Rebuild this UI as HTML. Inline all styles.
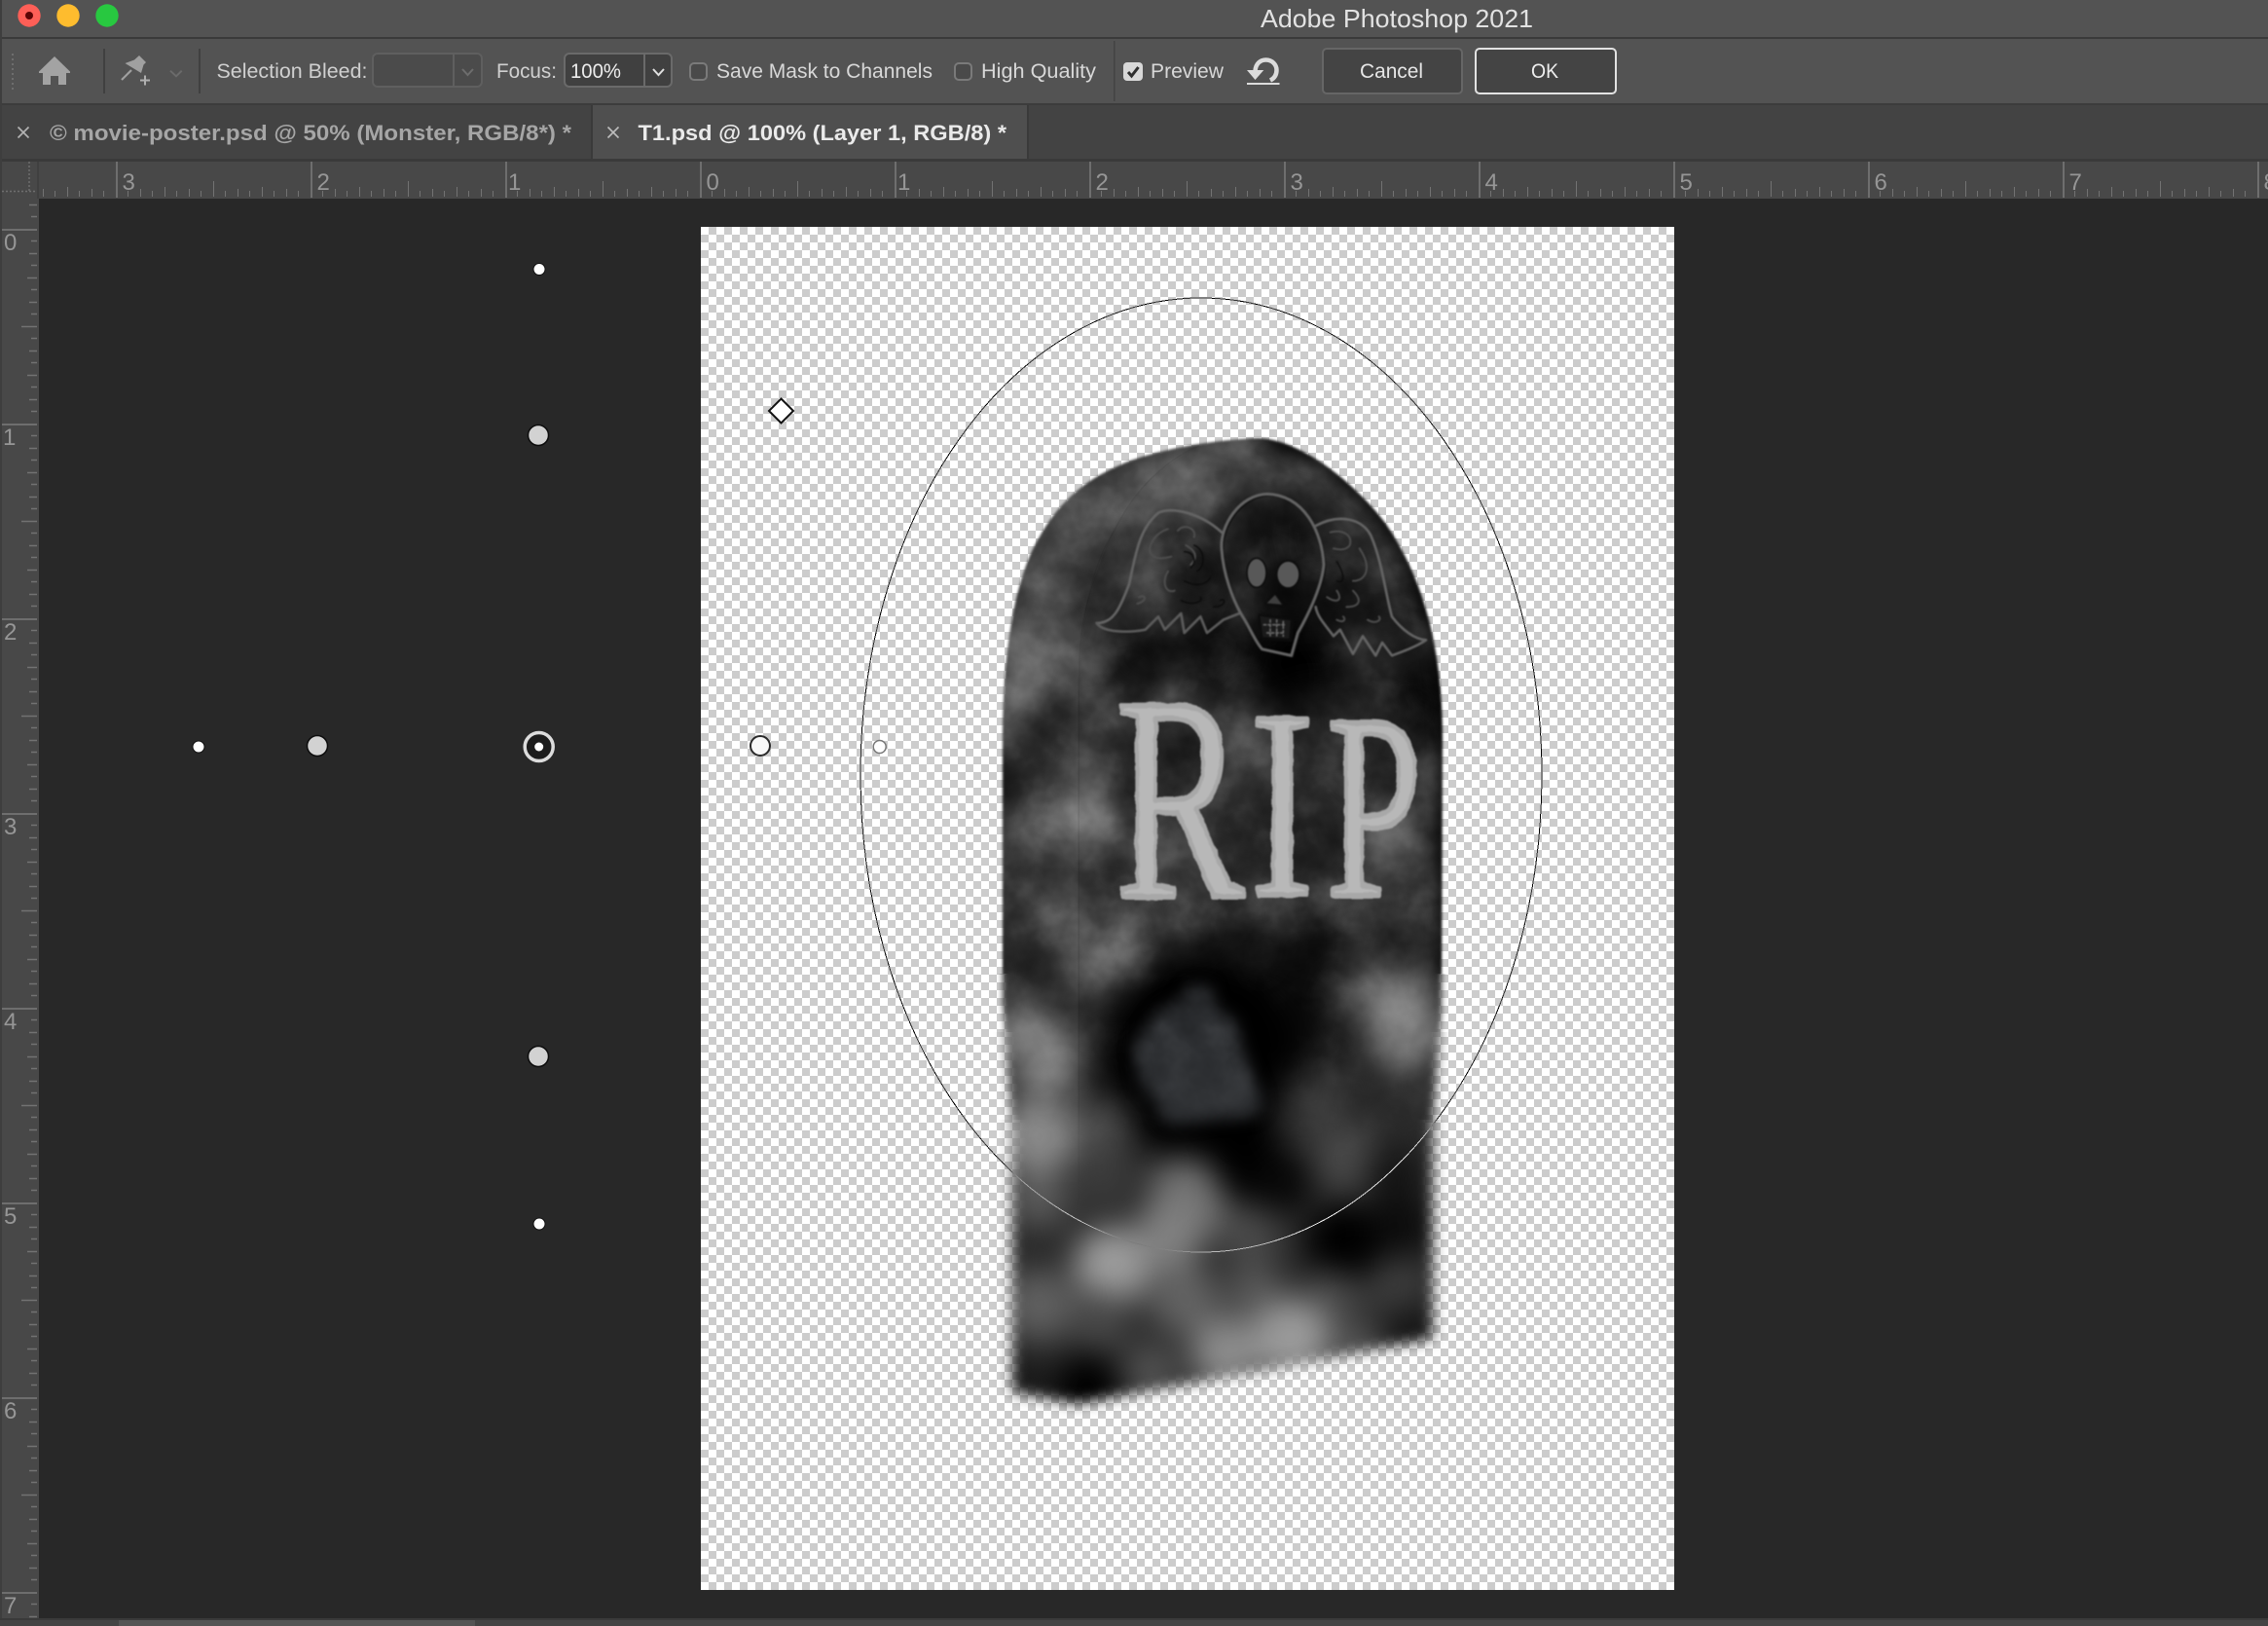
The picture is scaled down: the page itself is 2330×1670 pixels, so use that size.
<!DOCTYPE html>
<html lang="en"><head><meta charset="utf-8"><title>Adobe Photoshop 2021</title>
<style>
html,body{margin:0;padding:0;background:#282828;width:2330px;height:1670px;overflow:hidden}
svg{display:block}
text{font-family:"Liberation Sans",sans-serif}
</style></head><body>
<svg xmlns="http://www.w3.org/2000/svg" width="2330" height="1670" viewBox="0 0 2330 1670">
<defs>
<pattern id="chk" patternUnits="userSpaceOnUse" x="720" y="233" width="16" height="16">
<rect width="16" height="16" fill="#fff"/><rect x="8" width="8" height="8" fill="#ccc"/><rect y="8" width="8" height="8" fill="#ccc"/>
</pattern>
<pattern id="rh" patternUnits="userSpaceOnUse" x="719" y="0" width="200" height="210">
<rect x="0" y="166" width="2" height="37" fill="#6e6e6e"/>
<path stroke="#727272" stroke-width="1" fill="none" d="M12.5 202v-6M25.5 202v-8M37.5 202v-6M50.5 202v-10M62.5 202v-6M75.5 202v-8M87.5 202v-6M100.5 202v-16M112.5 202v-6M125.5 202v-8M137.5 202v-6M150.5 202v-10M162.5 202v-6M175.5 202v-8M187.5 202v-6"/>
</pattern>
<pattern id="rv" patternUnits="userSpaceOnUse" x="0" y="235" width="42" height="200">
<rect x="2" y="0" width="36" height="2" fill="#6e6e6e"/>
<path stroke="#727272" stroke-width="1.4" fill="none" d="M38 12.5h-6M38 25.5h-8M38 37.5h-6M38 50.5h-10M38 62.5h-6M38 75.5h-8M38 87.5h-6M38 100.5h-16M38 112.5h-6M38 125.5h-8M38 137.5h-6M38 150.5h-10M38 162.5h-6M38 175.5h-8M38 187.5h-6"/>
</pattern>
<path id="tp" d="M1030 1030 L1030 760 C1030 660 1045 590 1067 553 C1085 520 1110 495 1150 478 C1180 464 1240 452 1293 450 C1340 452 1395 500 1423 537 C1460 590 1482 660 1482 760 L1481 1040 L1472 1150 L1472 1375 L1107 1442 L1040 1430 L1040 1160 Z"/>
<filter id="f1" filterUnits="userSpaceOnUse" x="960" y="380" width="600" height="1140"><feGaussianBlur stdDeviation="1.4"/></filter>
<filter id="f2" filterUnits="userSpaceOnUse" x="960" y="380" width="600" height="1140"><feGaussianBlur stdDeviation="3"/></filter>
<filter id="f3" filterUnits="userSpaceOnUse" x="960" y="380" width="600" height="1140"><feGaussianBlur stdDeviation="5"/></filter>
<filter id="f4" filterUnits="userSpaceOnUse" x="960" y="380" width="600" height="1140"><feGaussianBlur stdDeviation="7"/></filter>
<filter id="blob" filterUnits="userSpaceOnUse" x="960" y="380" width="600" height="1140" color-interpolation-filters="sRGB"><feGaussianBlur stdDeviation="16"/></filter>
<filter id="b5" filterUnits="userSpaceOnUse" x="960" y="380" width="600" height="1140" color-interpolation-filters="sRGB"><feGaussianBlur stdDeviation="5"/></filter>
<filter id="b8" filterUnits="userSpaceOnUse" x="960" y="380" width="600" height="1140" color-interpolation-filters="sRGB"><feGaussianBlur stdDeviation="8"/></filter>
<filter id="b07" filterUnits="userSpaceOnUse" x="960" y="380" width="600" height="1140" color-interpolation-filters="sRGB"><feGaussianBlur stdDeviation="0.7"/></filter>
<filter id="rough" filterUnits="userSpaceOnUse" x="1100" y="690" width="400" height="270" color-interpolation-filters="sRGB">
<feTurbulence type="fractalNoise" baseFrequency="0.07" numOctaves="2" seed="3" result="t"/>
<feDisplacementMap in="SourceGraphic" in2="t" scale="4" xChannelSelector="R" yChannelSelector="G"/>
<feGaussianBlur stdDeviation="0.9"/>
</filter>
<filter id="noise" filterUnits="userSpaceOnUse" x="1000" y="430" width="520" height="1030" color-interpolation-filters="sRGB">
<feTurbulence type="fractalNoise" baseFrequency="0.02" numOctaves="4" seed="7"/>
<feColorMatrix type="matrix" values="1.4 0 0 0 -0.2  1.4 0 0 0 -0.2  1.4 0 0 0 -0.2  0 0 0 0 1"/>
</filter>
<linearGradient id="nf" gradientUnits="userSpaceOnUse" x1="0" y1="950" x2="0" y2="1200"><stop offset="0" stop-color="#fff"/><stop offset="1" stop-color="#000"/></linearGradient>
<mask id="nm" maskUnits="userSpaceOnUse" x="1000" y="430" width="520" height="1030"><rect x="1000" y="430" width="520" height="1030" fill="url(#nf)"/></mask>
<linearGradient id="sf" gradientUnits="userSpaceOnUse" x1="0" y1="1100" x2="0" y2="1240"><stop offset="0" stop-color="#fff"/><stop offset="1" stop-color="#000"/></linearGradient>
<mask id="sm" maskUnits="userSpaceOnUse" x="1000" y="430" width="520" height="1030"><rect x="1000" y="430" width="520" height="1030" fill="url(#sf)"/></mask>
<clipPath id="c1"><rect x="960" y="380" width="600" height="620"/></clipPath>
<clipPath id="c2"><rect x="960" y="1000" width="600" height="60"/></clipPath>
<clipPath id="c3"><rect x="960" y="1060" width="600" height="90"/></clipPath>
<clipPath id="c4"><rect x="960" y="1150" width="600" height="370"/></clipPath>
<mask id="tm" maskUnits="userSpaceOnUse" x="960" y="380" width="600" height="1140">
<g fill="#fff">
<g clip-path="url(#c1)"><use href="#tp" filter="url(#f1)"/></g>
<g clip-path="url(#c2)"><use href="#tp" filter="url(#f2)"/></g>
<g clip-path="url(#c3)"><use href="#tp" filter="url(#f3)"/></g>
<g clip-path="url(#c4)"><use href="#tp" filter="url(#f4)"/></g>
</g>
</mask>
</defs>

<!-- window chrome -->
<rect width="2330" height="1670" fill="#282828"/>
<rect width="2330" height="38" fill="#535353"/>
<rect y="38" width="2330" height="2" fill="#3a3a3a"/>
<rect y="40" width="2330" height="66" fill="#535353"/>
<rect y="106" width="2330" height="2" fill="#3c3c3c"/>
<rect y="108" width="2330" height="55" fill="#434343"/>
<rect x="609" y="108" width="446" height="55" fill="#4f4f4f"/>
<rect x="607" y="108" width="2" height="55" fill="#3a3a3a"/>
<rect x="1055" y="108" width="2" height="55" fill="#3a3a3a"/>
<rect y="163" width="2330" height="3" fill="#3a3a3a"/>
<rect y="166" width="2330" height="38" fill="#484848"/>
<rect x="0" y="204" width="40" height="1458" fill="#484848"/>
<rect y="0" width="2" height="1670" fill="#3e3e3e"/>

<circle cx="30" cy="16" r="11.7" fill="#fe5f57"/><circle cx="30" cy="16" r="4" fill="#5c0505"/>
<circle cx="70" cy="16" r="11.7" fill="#febc2e"/>
<circle cx="110" cy="16" r="11.7" fill="#28c840"/>
<text x="1295" y="28" font-size="26" fill="#e2e2e2" textLength="280" lengthAdjust="spacingAndGlyphs">Adobe Photoshop 2021</text>

<!-- toolbar -->
<line x1="13" y1="55" x2="13" y2="92" stroke="#6e6e6e" stroke-width="2" stroke-dasharray="2 3"/>
<path fill="#a3a3a3" d="M56 58 L72 73.5 V75 H68 V87 H60 V78 H52 V87 H44 V75 H40 V73.5 Z"/>
<rect x="106" y="50" width="2" height="46" fill="#404040"/>
<path fill="#a0a0a0" d="M143 57 L150 64 L147.5 66.5 L145 75 L128.5 65 L138 61.5 Z"/>
<path stroke="#a0a0a0" stroke-width="2.2" fill="none" d="M125 82 L135 72"/>
<path stroke="#b0b0b0" stroke-width="2" fill="none" d="M144 82.5h10M149 77.5v10"/>
<path stroke="#6b6b6b" stroke-width="2" fill="none" d="M175 72.7 L181 78.3 L186.7 72.7"/>
<rect x="204" y="50" width="2" height="46" fill="#404040"/>

<text x="222.5" y="80" font-size="21" fill="#d0d0d0" textLength="155" lengthAdjust="spacingAndGlyphs">Selection Bleed:</text>
<rect x="383" y="55" width="112" height="34" rx="5" fill="#4b4b4b" stroke="#5f5f5f" stroke-width="2"/>
<rect x="465" y="55" width="2" height="34" fill="#5f5f5f"/>
<path stroke="#6d6d6d" stroke-width="2" fill="none" d="M475 71 L480.5 77 L486 71"/>
<text x="510" y="80" font-size="21" fill="#d0d0d0" textLength="62" lengthAdjust="spacingAndGlyphs">Focus:</text>
<rect x="580" y="55" width="110" height="34" rx="5" fill="#404040" stroke="#6a6a6a" stroke-width="2"/>
<rect x="661" y="55" width="2" height="34" fill="#6a6a6a"/>
<path stroke="#e0e0e0" stroke-width="2" fill="none" d="M671 71 L676.5 77 L682 71"/>
<text x="586" y="80" font-size="21" fill="#ededed" textLength="52" lengthAdjust="spacingAndGlyphs">100%</text>
<rect x="709" y="65" width="17" height="17" rx="4" fill="#4a4a4a" stroke="#7a7a7a" stroke-width="2"/>
<text x="736" y="80" font-size="21" fill="#d8d8d8" textLength="222" lengthAdjust="spacingAndGlyphs">Save Mask to Channels</text>
<rect x="981" y="65" width="17" height="17" rx="4" fill="#4a4a4a" stroke="#7a7a7a" stroke-width="2"/>
<text x="1008" y="80" font-size="21" fill="#d8d8d8" textLength="118" lengthAdjust="spacingAndGlyphs">High Quality</text>
<rect x="1144" y="42" width="1.5" height="62" fill="#434343"/>
<rect x="1154" y="64" width="20" height="19" rx="4" fill="#d8d8d8"/>
<path stroke="#2e2e2e" stroke-width="3" fill="none" d="M1159 74 l3.5 4 l7 -9"/>
<text x="1182" y="80" font-size="21" fill="#d8d8d8" textLength="75" lengthAdjust="spacingAndGlyphs">Preview</text>
<path fill="#dcdcdc" d="M1281 72 L1298.3 72 L1289.5 82 Z"/>
<path stroke="#dcdcdc" stroke-width="4.5" fill="none" d="M1289.5 73 C1290 65 1295 61.5 1300.5 61.5 C1307 61.5 1311.5 66.5 1311.5 72 C1311.5 77 1309 80.5 1305 82.5"/>
<rect x="1281" y="85" width="33.5" height="2" fill="#dcdcdc"/>
<rect x="1359" y="50" width="143" height="46" rx="4" fill="#444" stroke="#666" stroke-width="2"/>
<text x="1397" y="80" font-size="21" fill="#e6e6e6" textLength="65" lengthAdjust="spacingAndGlyphs">Cancel</text>
<rect x="1516" y="50" width="144" height="46" rx="4" fill="#444" stroke="#e2e2e2" stroke-width="2"/>
<text x="1573" y="80" font-size="21" fill="#eee" textLength="28" lengthAdjust="spacingAndGlyphs">OK</text>

<!-- tabs -->
<path stroke="#b4b4b4" stroke-width="1.6" fill="none" d="M18.5 130.5 L29.5 141.5M29.5 130.5 L18.5 141.5"/>
<text x="51" y="144" font-size="22" font-weight="700" fill="#a6a6a6" textLength="536" lengthAdjust="spacingAndGlyphs">© movie-poster.psd @ 50% (Monster, RGB/8*) *</text>
<path stroke="#bdbdbd" stroke-width="1.6" fill="none" d="M624.5 130.5 L635.5 141.5M635.5 130.5 L624.5 141.5"/>
<text x="655.5" y="144" font-size="22" font-weight="700" fill="#eaeaea" textLength="378.5" lengthAdjust="spacingAndGlyphs">T1.psd @ 100% (Layer 1, RGB/8) *</text>

<!-- rulers -->
<rect x="40" y="166" width="2290" height="38" fill="url(#rh)"/>
<rect x="0" y="204" width="42" height="1458" fill="url(#rv)"/>
<path stroke="#6e6e6e" stroke-width="1.5" stroke-dasharray="2 2" fill="none" d="M30 166v31M2 196.5h36"/>
<rect x="38" y="166" width="2" height="38" fill="#404040"/>
<g font-size="24" fill="#969696">
<text x="125.5" y="195">3</text><text x="325.5" y="195">2</text><text x="522" y="195">1</text><text x="725.5" y="195">0</text>
<text x="922" y="195">1</text><text x="1125.5" y="195">2</text><text x="1325.5" y="195">3</text><text x="1525.5" y="195">4</text>
<text x="1725.5" y="195">5</text><text x="1925.5" y="195">6</text><text x="2125.5" y="195">7</text><text x="2325.5" y="195">8</text>
<text x="4" y="257">0</text><text x="3" y="457">1</text><text x="4" y="657">2</text><text x="4" y="857">3</text>
<text x="4" y="1057">4</text><text x="4" y="1257">5</text><text x="4" y="1457">6</text><text x="4" y="1657">7</text>
</g>

<!-- bottom bar -->
<rect y="1662" width="2330" height="8" fill="#444"/>
<rect y="1662" width="2330" height="2" fill="#3a3a3a"/>
<rect x="122" y="1664" width="366" height="6" fill="#545454"/>

<!-- document -->
<rect x="720" y="233" width="1000" height="1400" fill="url(#chk)"/>

<!-- tombstone -->
<g mask="url(#tm)">
<rect x="990" y="420" width="520" height="1040" fill="#2c2c2c"/>
<g filter="url(#blob)">
<circle cx="1293" cy="480" r="40" fill="#383838"/><circle cx="1250" cy="470" r="34" fill="#444"/><circle cx="1217" cy="492" r="32" fill="#6c6c6c"/><circle cx="1160" cy="520" r="36" fill="#454545"/><circle cx="1093" cy="533" r="34" fill="#505050"/><circle cx="1060" cy="565" r="34" fill="#424242"/><circle cx="1350" cy="500" r="36" fill="#363636"/><circle cx="1410" cy="527" r="34" fill="#2e2e2e"/><circle cx="1317" cy="553" r="38" fill="#0e0e0e"/><circle cx="1233" cy="587" r="40" fill="#181818"/><circle cx="1170" cy="600" r="34" fill="#383838"/><circle cx="1120" cy="620" r="34" fill="#363636"/><circle cx="1060" cy="620" r="34" fill="#4a4a4a"/><circle cx="1317" cy="620" r="38" fill="#0e0e0e"/><circle cx="1367" cy="603" r="36" fill="#161616"/><circle cx="1425" cy="620" r="34" fill="#1c1c1c"/><circle cx="1470" cy="620" r="26" fill="#222"/>
<circle cx="1050" cy="670" r="32" fill="#6a6a6a"/><circle cx="1100" cy="660" r="34" fill="#404040"/><circle cx="1167" cy="677" r="36" fill="#0e0e0e"/><circle cx="1250" cy="670" r="42" fill="#0e0e0e"/><circle cx="1333" cy="687" r="46" fill="#000"/><circle cx="1417" cy="697" r="30" fill="#222"/><circle cx="1465" cy="710" r="30" fill="#000"/><circle cx="1067" cy="707" r="32" fill="#666"/><circle cx="1200" cy="713" r="28" fill="#383838"/>
<circle cx="1033" cy="723" r="26" fill="#6a6a6a"/><circle cx="1077" cy="745" r="28" fill="#1c1c1c"/><circle cx="1125" cy="735" r="30" fill="#3c3c3c"/><circle cx="1203" cy="780" r="34" fill="#262626"/><circle cx="1277" cy="770" r="36" fill="#4a4a4a"/><circle cx="1350" cy="747" r="36" fill="#262626"/><circle cx="1427" cy="770" r="36" fill="#282828"/><circle cx="1470" cy="740" r="28" fill="#0a0a0a"/><circle cx="1040" cy="810" r="32" fill="#181818"/><circle cx="1100" cy="800" r="28" fill="#3c3c3c"/><circle cx="1117" cy="840" r="34" fill="#727272"/><circle cx="1060" cy="865" r="32" fill="#646464"/><circle cx="1200" cy="860" r="36" fill="#3e3e3e"/><circle cx="1273" cy="847" r="34" fill="#2a2a2a"/><circle cx="1333" cy="860" r="38" fill="#202020"/><circle cx="1433" cy="860" r="32" fill="#646464"/><circle cx="1470" cy="880" r="24" fill="#3a3a3a"/>
<circle cx="1050" cy="905" r="30" fill="#242424"/><circle cx="1083" cy="937" r="30" fill="#505050"/><circle cx="1067" cy="967" r="30" fill="#2e2e2e"/><circle cx="1133" cy="975" r="38" fill="#6e6e6e"/><circle cx="1123" cy="995" r="26" fill="#626262"/><circle cx="1050" cy="1000" r="32" fill="#1a1a1a"/><circle cx="1205" cy="935" r="36" fill="#3c3c3c"/><circle cx="1280" cy="930" r="36" fill="#2e2e2e"/><circle cx="1267" cy="973" r="30" fill="#1e1e1e"/><circle cx="1333" cy="967" r="30" fill="#2e2e2e"/><circle cx="1367" cy="967" r="30" fill="#0c0c0c"/><circle cx="1410" cy="930" r="36" fill="#3c3c3c"/><circle cx="1400" cy="985" r="28" fill="#2e2e2e"/><circle cx="1333" cy="1007" r="40" fill="#0c0c0c"/><circle cx="1423" cy="1020" r="30" fill="#6a6a6a"/><circle cx="1460" cy="1000" r="20" fill="#4c4c4c"/>
<circle cx="1443" cy="1060" r="38" fill="#8a8a8a"/><circle cx="1333" cy="1063" r="40" fill="#080808"/><circle cx="1380" cy="1075" r="28" fill="#1c1c1c"/><circle cx="1050" cy="1057" r="32" fill="#777"/><circle cx="1077" cy="1092" r="34" fill="#787878"/><circle cx="1133" cy="1073" r="30" fill="#2e2e2e"/>
<ellipse cx="1230" cy="1085" rx="100" ry="108" fill="#000"/>
<circle cx="1350" cy="1130" r="32" fill="#3c3c3c"/><circle cx="1433" cy="1123" r="30" fill="#2a2a2a"/><circle cx="1383" cy="1190" r="34" fill="#484848"/><circle cx="1433" cy="1207" r="30" fill="#141414"/>
<circle cx="1067" cy="1167" r="40" fill="#888"/><circle cx="1133" cy="1157" r="30" fill="#4a4a4a"/><circle cx="1133" cy="1210" r="28" fill="#3c3c3c"/><circle cx="1283" cy="1193" r="40" fill="#000"/><circle cx="1217" cy="1225" r="36" fill="#707070"/><circle cx="1317" cy="1215" r="32" fill="#080808"/><circle cx="1067" cy="1232" r="30" fill="#5c5c5c"/><circle cx="1067" cy="1285" r="28" fill="#2a2a2a"/><circle cx="1143" cy="1300" r="40" fill="#9c9c9c"/><circle cx="1227" cy="1240" r="32" fill="#747474"/><circle cx="1200" cy="1270" r="36" fill="#808080"/><circle cx="1283" cy="1270" r="30" fill="#4a4a4a"/><circle cx="1383" cy="1277" r="42" fill="#000"/><circle cx="1440" cy="1260" r="32" fill="#0c0c0c"/>
<circle cx="1433" cy="1320" r="30" fill="#3c3c3c"/><circle cx="1367" cy="1335" r="30" fill="#4c4c4c"/><circle cx="1217" cy="1335" r="36" fill="#626262"/><circle cx="1290" cy="1330" r="30" fill="#585858"/><circle cx="1067" cy="1340" r="36" fill="#606060"/><circle cx="1130" cy="1355" r="30" fill="#484848"/><circle cx="1327" cy="1375" r="40" fill="#9a9a9a"/><circle cx="1260" cy="1390" r="36" fill="#8c8c8c"/><circle cx="1450" cy="1367" r="26" fill="#141414"/><circle cx="1395" cy="1385" r="22" fill="#5c5c5c"/><circle cx="1183" cy="1410" r="28" fill="#525252"/><circle cx="1117" cy="1425" r="34" fill="#000"/><circle cx="1050" cy="1420" r="28" fill="#181818"/>
</g>
<path fill="#2e3033" filter="url(#b8)" d="M1222 1012 L1243 1012 L1249 1035 L1268 1047 L1278 1082 L1294 1120 L1297 1138 L1286 1147 L1250 1150 L1208 1156 L1193 1150 L1189 1132 L1170 1112 L1165 1075 L1186 1042 L1218 1024 Z"/>
<rect x="1000" y="430" width="520" height="1030" filter="url(#noise)" mask="url(#nm)" style="mix-blend-mode:soft-light" opacity=".5"/>
<!-- side panel & seam -->
<g mask="url(#sm)">
<path fill="#fff" opacity=".03" d="M1108 1442 L1108 730 C1108 680 1115 627 1115 627 C1122 595 1140 553 1140 553 C1155 525 1177 497 1177 497 C1195 478 1233 457 1233 457 L1150 470 L1020 560 L1020 1440 Z"/>
<path fill="none" stroke="#000" stroke-opacity=".08" stroke-width="1.5" d="M1108 1442 L1108 730 C1108 680 1110 650 1115 627 C1122 595 1130 570 1140 553 C1152 530 1165 510 1177 497 C1195 478 1215 465 1233 457"/>
</g>
<!-- right edge vignette -->
<path fill="none" stroke="#000" stroke-opacity=".55" stroke-width="14" filter="url(#b5)" d="M1300 452 C1345 458 1395 500 1423 537 C1460 590 1482 660 1482 760 L1481 1000"/>

<!-- skull with wings -->
<g filter="url(#b07)">
<g transform="translate(1000 420) scale(.33333)" fill="none" stroke-linejoin="round" stroke-linecap="round">
<g stroke="#0c0c0c" stroke-width="4" transform="translate(5 5)">
<path d="M905 262 C820 265 760 360 765 430 C770 510 800 590 830 640 C850 670 870 720 890 740 L980 760 L1000 690 C1040 620 1075 540 1080 480 C1075 380 1020 265 905 262 Z"/>
<path d="M880 635 L980 650 L975 710 L890 705 Z"/>
</g>
<g stroke="#646464" stroke-width="8">
<path d="M380 660 C430 660 450 620 480 540 C500 450 510 370 570 320 C610 300 700 320 765 380"/>
<path d="M380 660 C400 690 480 690 530 680 L570 640 L590 680 L640 630 L650 690 L700 640 L720 690 L770 650 L820 630" stroke="#5c5c5c"/>
<path d="M1055 360 C1130 320 1200 340 1225 390 C1260 470 1270 570 1290 640 C1320 680 1360 710 1395 712 C1370 730 1330 745 1290 760 L1260 720 L1240 760 L1200 700 L1170 755 L1130 680 L1110 700 C1080 660 1060 640 1055 610"/>
<path d="M905 262 C820 265 760 360 765 430 C770 510 800 590 830 640 C850 670 870 720 890 740 L980 760 L1000 690 C1040 620 1075 540 1080 480 C1075 380 1020 265 905 262 Z" stroke-width="9"/>
</g>
<g stroke="#4e4e4e" stroke-width="6">
<path d="M600 370 C560 380 530 430 550 450 C565 465 590 460 610 455"/>
<path d="M630 375 C650 350 690 370 680 395 M655 420 C690 440 690 460 670 480 M600 500 C580 530 590 570 620 560 M510 580 C530 570 540 590 505 600"/>
<path d="M1100 380 C1140 370 1170 390 1160 420 C1150 435 1130 435 1110 430 M1190 430 C1230 490 1210 530 1170 530 M1090 580 C1120 600 1140 590 1120 560 M1150 610 C1190 610 1200 590 1170 560 M1215 650 C1240 665 1260 650 1250 640 M1120 650 C1140 660 1150 650 1140 640"/>
</g>
<g stroke="#0a0a0a" stroke-width="4">
<path d="M650 440 C680 440 690 470 670 490 M680 420 C710 430 720 480 690 500 M640 590 C680 610 710 590 700 580 M650 530 C690 550 720 540 730 520 M1120 470 C1150 520 1140 540 1120 530 M740 610 C780 610 780 580 760 590"/>
</g>
<ellipse cx="873" cy="505" rx="30" ry="45" fill="#585858" stroke="#0c0c0c" stroke-width="5"/>
<ellipse cx="970" cy="510" rx="35" ry="42" fill="#585858" stroke="#0c0c0c" stroke-width="5"/>
<path d="M930 570 L955 605 L900 600 Z" fill="#3e3e3e" stroke="#0c0c0c" stroke-width="4"/>
<path d="M880 635 L980 650 L975 710 L890 705 Z" fill="#1a1a1a" stroke="#0c0c0c" stroke-width="5"/>
<path d="M895 665 h70 M905 690 h55 M915 650 v50 M935 650 v50 M955 655 v45" stroke="#6a6a6a" stroke-width="5" stroke-dasharray="7 7"/>
</g>
</g>

<!-- RIP -->
<g filter="url(#rough)" fill="#b8b8b8" stroke="#a8a8a8" stroke-width="6" stroke-linejoin="round">
<text style="font-family:'Liberation Serif',serif" transform="translate(1146 921) scale(.66 1)" font-size="300">R</text>
<text style="font-family:'Liberation Serif',serif" transform="translate(1285 919) scale(.7 1)" font-size="277">I</text>
<text style="font-family:'Liberation Serif',serif" transform="translate(1363 920) scale(.645 1)" font-size="272">P</text>
</g>
</g>

<!-- warp ellipse -->
<ellipse cx="1234" cy="796" rx="350" ry="490" fill="none" stroke="#fff" stroke-width="1" shape-rendering="crispEdges" style="mix-blend-mode:difference"/>

<!-- handles -->
<circle cx="554" cy="276.5" r="6" fill="#fff" stroke="#111" stroke-width="1"/>
<circle cx="553" cy="447" r="10.5" fill="#d2d2d2" stroke="#0c0c0c" stroke-width="1.5"/>
<circle cx="553" cy="1085" r="10.5" fill="#d2d2d2" stroke="#0c0c0c" stroke-width="1.5"/>
<circle cx="554" cy="1257" r="6" fill="#fff" stroke="#111" stroke-width="1"/>
<circle cx="204" cy="767" r="6" fill="#fff" stroke="#111" stroke-width="1"/>
<circle cx="326" cy="766" r="10.5" fill="#d2d2d2" stroke="#0c0c0c" stroke-width="1.5"/>
<circle cx="553.7" cy="767" r="14.5" fill="#1c1c1c" stroke="#dcdcdc" stroke-width="3.5"/>
<circle cx="553.7" cy="767" r="4.5" fill="#fff"/>
<circle cx="781" cy="766" r="10" fill="#f8f8f8" stroke="#2a2a2a" stroke-width="2"/>
<circle cx="903.7" cy="767" r="6.5" fill="#fff" stroke="#777" stroke-width="1.5"/>
<path d="M802.5 409.5 L815 422 L802.5 434.5 L790 422 Z" fill="#fff" stroke="#111" stroke-width="2"/>
</svg>
</body></html>
